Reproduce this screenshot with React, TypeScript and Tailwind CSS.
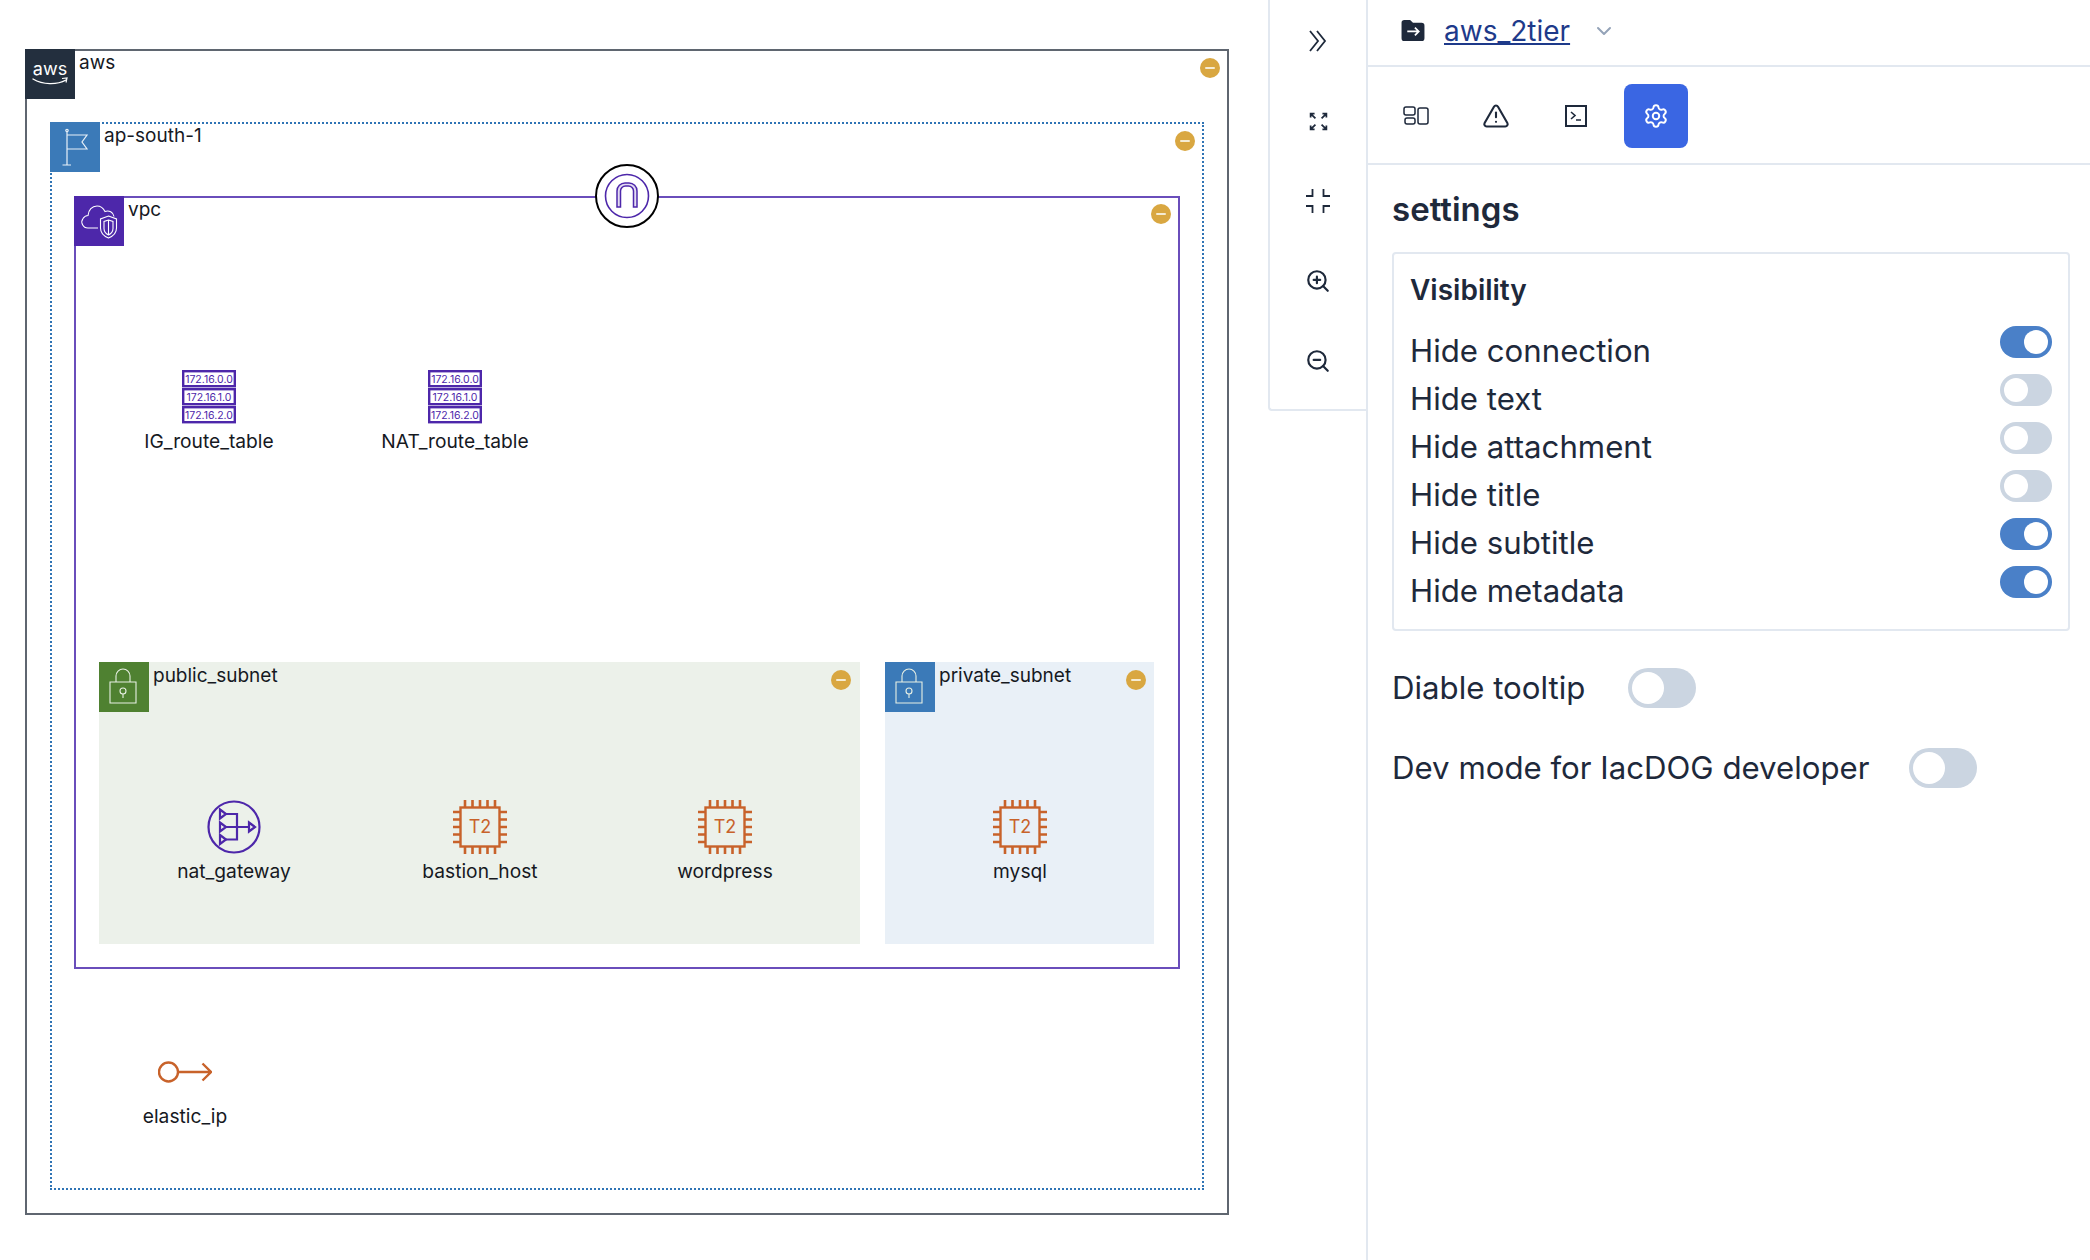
import type { ReactNode } from "react";
import { ChevronDown, Settings, TriangleAlert, ZoomIn, ZoomOut } from "lucide-react";

const PURPLE = "#4d27aa";
const ORANGE = "#c8622a";

function Collapse({ className }: { className: string }) {
  return (
    <div className={`absolute flex h-5 w-5 items-center justify-center rounded-full bg-[#d9a741] ${className}`}>
      <div className="h-[2px] w-[10px] rounded-full bg-[#f5ecd4]" />
    </div>
  );
}

function AwsLogo() {
  return (
    <svg viewBox="0 0 50 50" className="h-full w-full">
      <text x="25" y="26" textAnchor="middle" fontSize="18" fill="#fff" fontFamily="Inter, sans-serif">
        aws
      </text>
      <path d="M8 30c10 6 24 6 33 1" fill="none" stroke="#fff" strokeWidth="1.4" strokeLinecap="round" />
      <path d="M37 29.500l5-.5-1 4.500" fill="none" stroke="#fff" strokeWidth="1.200" />
    </svg>
  );
}

function FlagIcon() {
  return (
    <svg viewBox="0 0 50 50" className="h-full w-full" fill="none" stroke="#e8f0f8" strokeWidth="1.200">
      <circle cx="17" cy="8.500" r="1.200" />
      <path d="M17 9.500V43M12.500 43h8.500M17 13h20l-5 7 5 7H17" />
    </svg>
  );
}

function CloudShieldIcon() {
  return (
    <svg viewBox="0 0 50 50" className="h-full w-full" fill="none" stroke="#fff" strokeWidth="1.100">
      <path d="M24 32H14a6 6 0 0 1-5-9.500 6 6 0 0 1 5-3c.5-5.500 4-9.500 9-9.500 4 0 6.500 2.500 8 5.500a6.500 6.500 0 0 1 9 5" />
      <path d="M34.500 20l8 3v9c0 5-3 8-8 10-5-2-8-5-8-10v-9z" />
      <path d="M34.500 24l4.500 1.500v7c0 3-1.500 5-4.500 6.500-3-1.500-4.500-3.500-4.500-6.500v-7zM34.500 24v15" />
    </svg>
  );
}

function LockIcon() {
  return (
    <svg viewBox="0 0 50 50" className="h-full w-full" fill="none" stroke="#e8f0e4" strokeWidth="1.100">
      <path d="M11 20h26v21H11zM17 20v-6a7 7 0 0 1 14 0v6" />
      <circle cx="24" cy="29" r="3" />
      <path d="M24 32v4" />
    </svg>
  );
}

function RouteTableIcon() {
  return (
    <svg viewBox="0 0 54 54" className="h-[54px] w-[54px]">
      {["172.16.0.0", "172.16.1.0", "172.16.2.0"].map((ip, i) => (
        <g key={ip}>
          <rect x="1.200" y={1.2 + i * 18} width="51.600" height="15" fill="#fff" stroke={PURPLE} strokeWidth="2.400" />
          <text x="27" y={12.5 + i * 18} textAnchor="middle" fontSize="10.5" fill={PURPLE} fontFamily="Inter, sans-serif">
            {ip}
          </text>
        </g>
      ))}
    </svg>
  );
}

function NatIcon() {
  return (
    <svg viewBox="0 0 54 54" className="h-[54px] w-[54px]" fill="none" stroke={PURPLE} strokeWidth="2.200">
      <circle cx="27" cy="27" r="25.500" />
      <path d="M19 14h11v25.500H19M19 27h23" />
      <path d="M13 9.500l6 4.500-6 4.500zM13 22.500l6 4.500-6 4.500zM13 35l6 4.500-6 4.500zM42 22.500l6 4.500-6 4.500z" />
    </svg>
  );
}

function ChipIcon() {
  const pins = [12, 19.5, 27, 34.5, 42];
  return (
    <svg viewBox="0 0 54 54" className="h-[54px] w-[54px]" fill="none" stroke={ORANGE} strokeWidth="2.600">
      <rect x="7.500" y="7.500" width="39" height="39" strokeWidth="2.400" />
      {pins.map((p) => (
        <path key={p} d={`M${p} 0v7M${p} 47v7M0 ${p}h7M47 ${p}h7`} />
      ))}
      <text x="27" y="33" textAnchor="middle" fontSize="18" fill={ORANGE} stroke="none" fontFamily="Inter, sans-serif">
        T2
      </text>
    </svg>
  );
}

function ElasticIpIcon() {
  return (
    <svg viewBox="0 0 54 54" className="h-[54px] w-[54px]" fill="none" stroke={ORANGE} strokeWidth="2.400">
      <circle cx="10.500" cy="27" r="9.500" />
      <path d="M20 27h33M44.500 18.500l8.500 8.500-8.500 8.500" />
    </svg>
  );
}

function GatewayIcon() {
  return (
    <svg viewBox="0 0 64 64" className="h-16 w-16">
      <circle cx="32" cy="32" r="31" fill="#fff" stroke="#000" strokeWidth="2" />
      <circle cx="32" cy="32" r="21.500" fill="none" stroke={PURPLE} strokeWidth="1.600" />
      <path d="M22 43V27a8 8 0 0 1 8-8h4a8 8 0 0 1 8 8v16h-3.500V27a5 5 0 0 0-5-5h-3a5 5 0 0 0-5 5v16z" fill="#e3dcf3" stroke={PURPLE} strokeWidth="1.500" />
    </svg>
  );
}

function Node({ label, className, children }: { label: string; className: string; children: ReactNode }) {
  return (
    <div className={`absolute flex w-[180px] -translate-x-1/2 flex-col items-center ${className}`}>
      <div className="flex h-[54px] items-center">{children}</div>
      <div className="-mt-px text-[19.2px] leading-9 text-[#16191f]">{label}</div>
    </div>
  );
}

function GroupHeader({ icon, label, iconBg, className }: { icon: ReactNode; label: string; iconBg: string; className: string }) {
  return (
    <div className={`absolute flex items-start gap-[4px] ${className}`}>
      <div className={`h-[50px] w-[50px] ${iconBg}`}>{icon}</div>
      <span className="pt-[2px] text-[19px] leading-6 text-[#16191f]">{label}</span>
    </div>
  );
}

function Diagram() {
  return (
    <div className="relative flex-1">
      <div className="absolute left-[25px] top-[49px] h-[1166px] w-[1204px] border-2 border-[#5f6670]">
        <GroupHeader icon={<AwsLogo />} label="aws" iconBg="bg-[#232f3e]" className="-left-[2px] -top-[2px]" />
        <Collapse className="right-[7px] top-[7px]" />

        <div className="absolute left-[23px] top-[71px] h-[1068px] w-[1154px] border-2 border-dotted border-[#2f74b5]">
          <GroupHeader icon={<FlagIcon />} label="ap-south-1" iconBg="bg-[#3b7ab8]" className="-left-[2px] -top-[2px]" />
          <Collapse className="right-[7px] top-[7px]" />

          <div className="absolute left-[22px] top-[72px] h-[773px] w-[1106px] border-2 border-[#6a4ebb]">
            <GroupHeader icon={<CloudShieldIcon />} label="vpc" iconBg="bg-[#4d27aa]" className="-left-[2px] -top-[2px]" />
            <Collapse className="right-[7px] top-[6px]" />
            <div className="absolute left-[519px] -top-[34px]">
              <GatewayIcon />
            </div>

            <Node label="IG_route_table" className="left-[133px] top-[172px]">
              <RouteTableIcon />
            </Node>
            <Node label="NAT_route_table" className="left-[379px] top-[172px]">
              <RouteTableIcon />
            </Node>

            <div className="absolute left-[23px] top-[464px] h-[282px] w-[761px] bg-[#ecf1ea]">
              <GroupHeader icon={<LockIcon />} label="public_subnet" iconBg="bg-[#4f8131]" className="left-0 top-0" />
              <Collapse className="right-[9px] top-[8px]" />
              <Node label="nat_gateway" className="left-[135px] top-[138px]">
                <NatIcon />
              </Node>
              <Node label="bastion_host" className="left-[381px] top-[138px]">
                <ChipIcon />
              </Node>
              <Node label="wordpress" className="left-[626px] top-[138px]">
                <ChipIcon />
              </Node>
            </div>

            <div className="absolute left-[809px] top-[464px] h-[282px] w-[269px] bg-[#e9f0f7]">
              <GroupHeader icon={<LockIcon />} label="private_subnet" iconBg="bg-[#3b7ab8]" className="left-0 top-0" />
              <Collapse className="right-[8px] top-[8px]" />
              <Node label="mysql" className="left-[135px] top-[138px]">
                <ChipIcon />
              </Node>
            </div>
          </div>

          <Node label="elastic_ip" className="left-[133px] top-[921px]">
            <ElasticIpIcon />
          </Node>
        </div>
      </div>
    </div>
  );
}

function FitIcon() {
  return (
    <svg viewBox="0 0 24 24" className="h-[21px] w-[21px]" fill="none" stroke="#1e293b" strokeWidth="2">
      <path d="M3.500 3.500l5 5M3 7.500V3h4.500M20.500 3.500l-5 5M16.500 3H21v4.500M3.500 20.500l5-5M3 16.500V21h4.500M20.500 20.500l-5-5M21 16.500V21h-4.500" />
    </svg>
  );
}

function CompressIcon() {
  return (
    <svg viewBox="0 0 24 24" className="h-6 w-6" fill="none" stroke="#1e293b" strokeWidth="1.800">
      <path d="M0 7h6.500V0M24 7h-6.500V0M0 17h6.500v7M24 17h-6.500v7" />
    </svg>
  );
}

function DoubleChevron() {
  return (
    <svg viewBox="0 0 18 22" className="h-[22px] w-[18px]" fill="none" stroke="#1e293b" strokeWidth="1.800">
      <path d="M1 1l8 10-8 10M8 1l8 10-8 10" />
    </svg>
  );
}

function Toolbar() {
  const btn = "flex h-20 items-center justify-center";
  return (
    <div className="h-[411px] w-[98px] rounded-bl border-b-2 border-l-2 border-[#e2e8f0] pt-px">
      <div className={btn}>
        <DoubleChevron />
      </div>
      <div className={btn}>
        <FitIcon />
      </div>
      <div className={btn}>
        <CompressIcon />
      </div>
      <div className={btn}>
        <ZoomIn size={26} strokeWidth={2} className="text-[#1e293b]" />
      </div>
      <div className={btn}>
        <ZoomOut size={26} strokeWidth={2} className="text-[#1e293b]" />
      </div>
    </div>
  );
}

function Toggle({ on, large }: { on?: boolean; large?: boolean }) {
  return (
    <div
      className={`flex shrink-0 items-center rounded-full p-1 ${large ? "h-10 w-[68px]" : "h-8 w-[52px]"} ${
        on ? "justify-end bg-[#4a80c8]" : "justify-start bg-[#cbd5e1]"
      }`}
    >
      <div className={`rounded-full bg-white ${large ? "h-8 w-8" : "h-6 w-6"}`} />
    </div>
  );
}

const visibility = [
  { label: "Hide connection", on: true },
  { label: "Hide text", on: false },
  { label: "Hide attachment", on: false },
  { label: "Hide title", on: false },
  { label: "Hide subtitle", on: true },
  { label: "Hide metadata", on: true },
];

function Sidebar() {
  return (
    <div className="flex h-full w-[724px] flex-col border-l-2 border-[#e2e8f0] text-[#1e293b]">
      <div className="flex h-[67px] items-center border-b-2 border-[#e2e8f0] pb-1 pl-[33px]">
        <svg viewBox="0 0 24 22" className="h-[21px] w-6">
          <path d="M0 3a3 3 0 0 1 3-3h6l3 3h9a3 3 0 0 1 3 3v13a3 3 0 0 1-3 3H3a3 3 0 0 1-3-3z" fill="#1e293b" />
          <path d="M6 12h12M14 8l4 4-4 4" fill="none" stroke="#fff" strokeWidth="1.800" />
        </svg>
        <span className="ml-[19px] text-[28px] text-[#1e3a8a] underline">aws_2tier</span>
        <ChevronDown size={24} className="ml-[22px] text-[#94a3b8]" />
      </div>

      <div className="flex h-[98px] gap-4 border-b-2 border-[#e2e8f0] px-4 pt-[17px]">
        <div className="flex h-16 w-16 items-center justify-center">
          <svg viewBox="0 0 26 24" className="h-6 w-[26px]" fill="none" stroke="#1e293b" strokeWidth="1.500">
            <rect x="1" y="3" width="11" height="8" rx="2" />
            <rect x="2" y="14" width="10" height="6" rx="2" />
            <rect x="15" y="4" width="10" height="16" rx="2" />
          </svg>
        </div>
        <div className="flex h-16 w-16 items-center justify-center">
          <TriangleAlert size={28} strokeWidth={1.800} className="text-[#1e293b]" />
        </div>
        <div className="flex h-16 w-16 items-center justify-center">
          <svg viewBox="0 0 24 24" className="h-6 w-6" fill="none" stroke="#1e293b" strokeWidth="2">
            <rect x="2" y="2" width="20" height="20" />
            <path d="M7 8l4 3.500L7 15M12 16h5" strokeWidth="1.600" />
          </svg>
        </div>
        <div className="flex h-16 w-16 items-center justify-center rounded-lg bg-[#3a66e3]">
          <Settings size={26} strokeWidth={1.800} className="text-white" />
        </div>
      </div>

      <div className="pl-[24px] pr-[20px] pt-[26px]">
        <h2 className="mb-[25px] text-[33px] font-semibold leading-9">settings</h2>

        <div className="rounded border-2 border-[#e2e8f0] px-4 pt-4 pb-[14px]">
          <h3 className="mb-[17px] h-10 text-[28px] font-semibold leading-10">Visibility</h3>
          {visibility.map((row) => (
            <div key={row.label} className="flex h-12 items-start justify-between">
              <span className="text-[31.2px] leading-12">{row.label}</span>
              <div className="-mt-px">
                <Toggle on={row.on} />
              </div>
            </div>
          ))}
        </div>

        <div className="mt-[37px] flex h-10 items-center gap-[43px]">
          <span className="text-[31.2px]">Diable tooltip</span>
          <Toggle large />
        </div>
        <div className="mt-10 flex h-10 items-center gap-10">
          <span className="text-[31.2px]">Dev mode for IacDOG developer</span>
          <Toggle large />
        </div>
      </div>
    </div>
  );
}

export default function App() {
  return (
    <div className="flex h-screen w-full overflow-hidden bg-white font-['Inter',sans-serif]">
      <Diagram />
      <Toolbar />
      <Sidebar />
    </div>
  );
}
